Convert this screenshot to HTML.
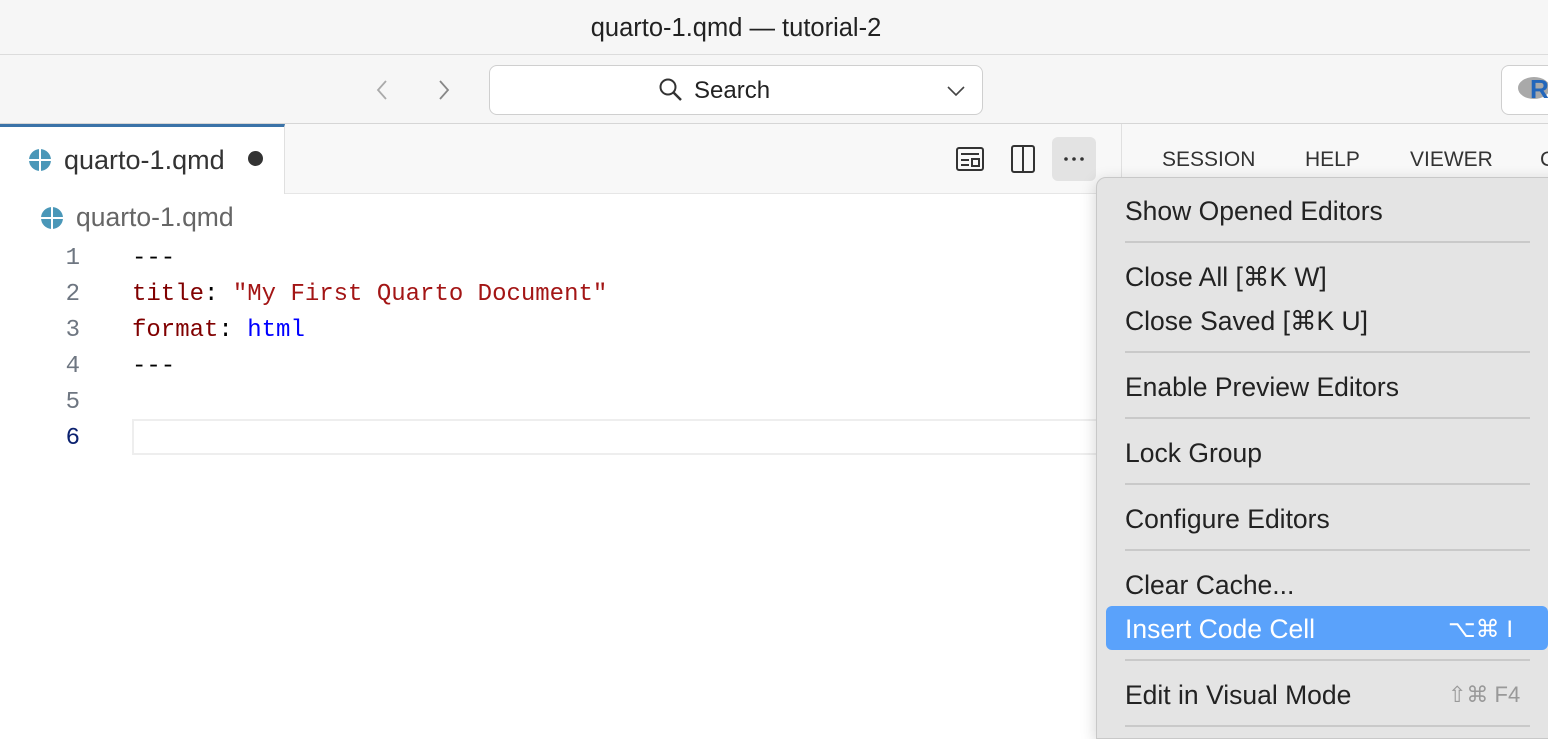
<!DOCTYPE html><html><head><style>
body{margin:0;width:1548px;height:728px;overflow:hidden;background:#fff;font-family:"Liberation Sans",sans-serif;position:relative}
.a{position:absolute}
.mono{font-family:"Liberation Mono",monospace;font-size:24px}
.mi{position:absolute;left:1125px;font-size:26.5px;color:#222}
.sep{position:absolute;left:1125px;width:405px;height:2px;background:#c9c9c9}
</style></head><body>
<div class="a" style="left:0;top:0;width:1548px;height:54px;background:#f6f6f6;border-bottom:1px solid #dcdcdc"></div>
<div class="a" style="left:0;top:14px;width:1472px;text-align:center;font-size:25.5px;color:#222">quarto-1.qmd — tutorial-2</div>
<div class="a" style="left:0;top:55px;width:1548px;height:68px;background:#f6f6f6;border-bottom:1px solid #d6d6d6"></div>
<svg class="a" style="left:374px;top:79px" width="16" height="22"><path d="M12 2L4 11l8 9" fill="none" stroke="#aaa" stroke-width="1.8"/></svg>
<svg class="a" style="left:436px;top:79px" width="16" height="22"><path d="M4 2l8 9-8 9" fill="none" stroke="#888" stroke-width="1.8"/></svg>
<div class="a" style="left:489px;top:65px;width:492px;height:48px;background:#fff;border:1px solid #cfcfcf;border-radius:8px"></div>
<svg class="a" style="left:658px;top:77px" width="26" height="26"><circle cx="10" cy="10" r="7.5" fill="none" stroke="#333" stroke-width="2"/><path d="M15.5 15.5L23 23" stroke="#333" stroke-width="2.5"/></svg>
<div class="a" style="left:694px;top:77px;font-size:24px;color:#222">Search</div>
<svg class="a" style="left:946px;top:84px" width="20" height="14"><path d="M2 3l8 8 8-8" fill="none" stroke="#444" stroke-width="1.6"/></svg>
<div class="a" style="left:1501px;top:65px;width:60px;height:48px;background:#fff;border:1px solid #cfcfcf;border-radius:8px"></div>
<div class="a" style="left:1518px;top:77px;width:32px;height:22px;border-radius:50%;background:#a9a9a9"></div>
<div class="a" style="left:1530px;top:74px;font-size:26px;font-weight:bold;color:#2266bb">R</div>
<div class="a" style="left:0;top:124px;width:1121px;height:69px;background:#f8f8f8;border-bottom:1px solid #e6e6e6"></div>
<div class="a" style="left:0;top:124px;width:285px;height:70px;background:#fff;border-top:3px solid #3b73a8;border-right:1px solid #e0e0e0;box-sizing:border-box"></div>
<svg class="a" style="left:28px;top:148px" width="24" height="24"><circle cx="12" cy="12" r="11" fill="#4a97b8"/><path d="M12 1v22M1 12h22" stroke="#fff" stroke-width="2"/></svg>
<div class="a" style="left:64px;top:145px;font-size:27px;color:#333">quarto-1.qmd</div>
<div class="a" style="left:248px;top:151px;width:15px;height:15px;border-radius:50%;background:#333"></div>
<svg class="a" style="left:955px;top:146px" width="30" height="26"><rect x="2" y="2" width="26" height="22" rx="2" fill="none" stroke="#333" stroke-width="2"/><path d="M6 8h18M6 14h8M6 19h8" stroke="#333" stroke-width="2"/><rect x="17" y="13" width="7" height="7" fill="none" stroke="#333" stroke-width="2"/></svg>
<svg class="a" style="left:1010px;top:144px" width="26" height="30"><rect x="2" y="2" width="22" height="26" rx="2" fill="none" stroke="#333" stroke-width="2"/><path d="M13 2v26" stroke="#333" stroke-width="2"/></svg>
<div class="a" style="left:1052px;top:137px;width:44px;height:44px;background:#e3e3e3;border-radius:6px"></div>
<svg class="a" style="left:1052px;top:137px" width="44" height="44"><circle cx="14" cy="22" r="1.8" fill="#333"/><circle cx="22" cy="22" r="1.8" fill="#333"/><circle cx="30" cy="22" r="1.8" fill="#333"/></svg>
<div class="a" style="left:1121px;top:124px;width:1px;height:604px;background:#e0e0e0"></div>
<div class="a" style="left:1122px;top:124px;width:426px;height:69px;background:#f8f8f8"></div>
<div class="a" style="left:1162px;top:148px;font-size:21px;color:#333">SESSION</div>
<div class="a" style="left:1305px;top:148px;font-size:21px;color:#333">HELP</div>
<div class="a" style="left:1410px;top:148px;font-size:21px;color:#333">VIEWER</div>
<div class="a" style="left:1540px;top:148px;font-size:21px;color:#333">C</div>
<svg class="a" style="left:40px;top:206px" width="24" height="24"><circle cx="12" cy="12" r="11" fill="#4a97b8"/><path d="M12 1v22M1 12h22" stroke="#fff" stroke-width="2"/></svg>
<div class="a" style="left:76px;top:202px;font-size:26.5px;color:#666">quarto-1.qmd</div>
<div class="a mono" style="left:40px;top:241px;width:40px;text-align:right;color:#6e7681;line-height:36px">1<br>2<br>3<br>4<br>5<br><span style="color:#0b216f">6</span></div>
<div class="a" style="left:132px;top:419px;width:964px;height:32px;border:2px solid #eee"></div>
<div class="a mono" style="left:132px;top:241px;line-height:36px;color:#000;white-space:pre">---
<span style="color:#800000">title</span>: <span style="color:#a31515">"My First Quarto Document"</span>
<span style="color:#800000">format</span>: <span style="color:#0000ff">html</span>
---</div>
<div class="a" style="left:1096px;top:177px;width:470px;height:560px;background:#e4e4e4;border:1px solid #c8c8c8;border-radius:10px 0 0 0;box-shadow:0 4px 16px rgba(0,0,0,.18)"></div>
<div class="mi" style="top:196px">Show Opened Editors</div>
<div class="sep" style="top:241px"></div>
<div class="mi" style="top:262px">Close All [⌘K W]</div>
<div class="mi" style="top:306px">Close Saved [⌘K U]</div>
<div class="sep" style="top:351px"></div>
<div class="mi" style="top:372px">Enable Preview Editors</div>
<div class="sep" style="top:417px"></div>
<div class="mi" style="top:438px">Lock Group</div>
<div class="sep" style="top:483px"></div>
<div class="mi" style="top:504px">Configure Editors</div>
<div class="sep" style="top:549px"></div>
<div class="mi" style="top:570px">Clear Cache...</div>
<div class="a" style="left:1106px;top:606px;width:442px;height:44px;background:#5aa2fb;border-radius:6px"></div>
<div class="mi" style="top:614px;color:#fff">Insert Code Cell</div>
<div class="a" style="left:1448px;top:615px;font-size:24px;color:#fff">⌥⌘ I</div>
<div class="sep" style="top:659px"></div>
<div class="mi" style="top:680px">Edit in Visual Mode</div>
<div class="a" style="left:1448px;top:682px;font-size:22px;color:#999">⇧⌘ F4</div>
<div class="sep" style="top:725px"></div>
</body></html>
